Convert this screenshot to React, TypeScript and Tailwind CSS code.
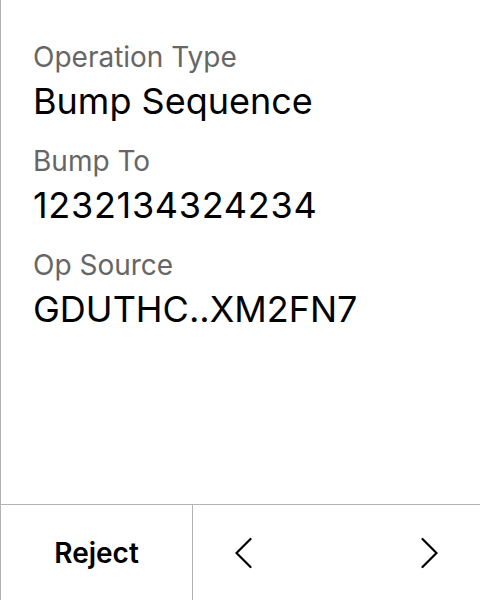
export default function App() {
  const rows = [
    { label: 'Operation Type', value: 'Bump Sequence', track: '' },
    { label: 'Bump To', value: '1232134324234', track: 'tracking-[0.7px]' },
    { label: 'Op Source', value: 'GDUTHC..XM2FN7', track: '' },
  ]

  return (
    <div
      className="h-[600px] w-[480px] flex flex-col bg-white border-l border-[#b3b3b3]"
      style={{ fontFamily: 'Inter, "Noto Sans", sans-serif' }}
    >
      <div className="flex-1 flex flex-col pl-[32px] pt-[40px] gap-[21px]">
        {rows.map((row) => (
          <div key={row.label} className="flex flex-col gap-[5px]">
            <div className="text-[28px] leading-[34px] text-[#666666]">{row.label}</div>
            <div className={`text-[36px] leading-[44px] text-black ${row.track}`}>{row.value}</div>
          </div>
        ))}
      </div>

      <div className="h-[96px] flex border-t border-[#b3b3b3]">
        <button className="w-[192px] flex items-center justify-center text-[28px] font-semibold text-black border-r border-[#b3b3b3]">
          Reject
        </button>
        <div className="flex-1 flex items-center justify-between pl-[42px] pr-[42px]">
          <svg width="20" height="32" viewBox="0 0 20 32" fill="none" stroke="black" strokeWidth="2.2" strokeLinecap="round">
            <path d="M15.5 2 L1.5 16 L15.5 30" />
          </svg>
          <svg width="20" height="32" viewBox="0 0 20 32" fill="none" stroke="black" strokeWidth="2.2" strokeLinecap="round">
            <path d="M4.5 2 L18.5 16 L4.5 30" />
          </svg>
        </div>
      </div>
    </div>
  )
}
